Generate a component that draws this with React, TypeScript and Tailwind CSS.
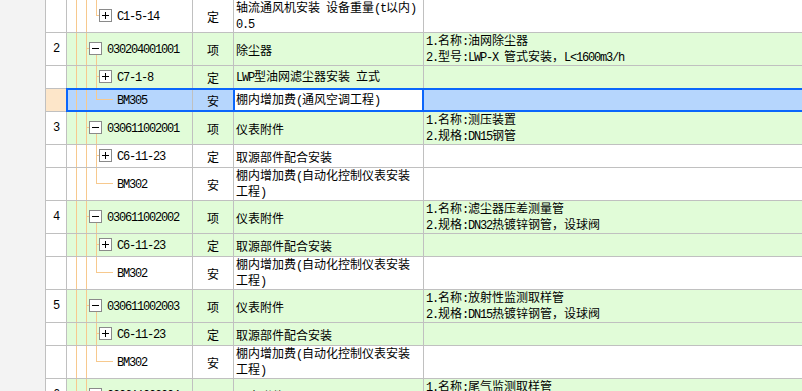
import React from 'react';

type Kind = 'item' | 'child' | 'last' | 'lastBox';

interface RowData {
  idx?: string;
  kind: Kind;
  code: string;
  type: string;
  name: string[];
  feat: string[];
  bg: 'green' | 'white' | 'sel';
  tall: boolean;
}

const rows: RowData[] = [
  { kind: 'lastBox', code: 'C1-5-14', type: '定', name: ['轴流通风机安装 设备重量(t以内)', '0.5'], feat: [], bg: 'white', tall: true },
  { idx: '2', kind: 'item', code: '030204001001', type: '项', name: ['除尘器'], feat: ['1.名称:油网除尘器', '2.型号:LWP-X 管式安装，L<1600m3/h'], bg: 'green', tall: true },
  { kind: 'child', code: 'C7-1-8', type: '定', name: ['LWP型油网滤尘器安装 立式'], feat: [], bg: 'green', tall: false },
  { kind: 'last', code: 'BM305', type: '安', name: ['棚内增加费(通风空调工程)'], feat: [], bg: 'sel', tall: false },
  { idx: '3', kind: 'item', code: '030611002001', type: '项', name: ['仪表附件'], feat: ['1.名称:测压装置', '2.规格:DN15钢管'], bg: 'green', tall: true },
  { kind: 'child', code: 'C6-11-23', type: '定', name: ['取源部件配合安装'], feat: [], bg: 'white', tall: false },
  { kind: 'last', code: 'BM302', type: '安', name: ['棚内增加费(自动化控制仪表安装', '工程)'], feat: [], bg: 'white', tall: true },
  { idx: '4', kind: 'item', code: '030611002002', type: '项', name: ['仪表附件'], feat: ['1.名称:滤尘器压差测量管', '2.规格:DN32热镀锌钢管，设球阀'], bg: 'green', tall: true },
  { kind: 'child', code: 'C6-11-23', type: '定', name: ['取源部件配合安装'], feat: [], bg: 'green', tall: false },
  { kind: 'last', code: 'BM302', type: '安', name: ['棚内增加费(自动化控制仪表安装', '工程)'], feat: [], bg: 'white', tall: true },
  { idx: '5', kind: 'item', code: '030611002003', type: '项', name: ['仪表附件'], feat: ['1.名称:放射性监测取样管', '2.规格:DN15热镀锌钢管，设球阀'], bg: 'green', tall: true },
  { kind: 'child', code: 'C6-11-23', type: '定', name: ['取源部件配合安装'], feat: [], bg: 'green', tall: false },
  { kind: 'last', code: 'BM302', type: '安', name: ['棚内增加费(自动化控制仪表安装', '工程)'], feat: [], bg: 'white', tall: true },
  { idx: '6', kind: 'item', code: '030611002004', type: '项', name: ['仪表附件'], feat: ['1.名称:尾气监测取样管', '2.规格:DN15热镀锌钢管，设球阀'], bg: 'green', tall: true },
];

// ascii runs get a half-width mono face, like the song-style font in the original grid
function Txt({ s }: { s: string }) {
  const parts = s.split(/([\x20-\x7e]+)/).filter(Boolean);
  return (
    <>
      {parts.map((p, i) =>
        /^[\x20-\x7e]+$/.test(p) ? (
          <span key={i} className="font-['Liberation_Mono',monospace] tracking-[-1.2px] whitespace-pre">
            {p}
          </span>
        ) : (
          <span key={i}>{p}</span>
        )
      )}
    </>
  );
}

const LINE = '#f7c98e';

// expand/collapse box, bx = left pixel, m = row of the connector line
function Box({ bx, m, minus }: { bx: number; m: number; minus?: boolean }) {
  return (
    <g>
      <rect x={bx + 0.5} y={m - 5.5} width="12" height="12" fill="white" stroke="#8a8a8a" />
      <path d={`M${bx + 3} ${m + 0.5}h7`} stroke="#000" />
      {!minus && <path d={`M${bx + 6.5} ${m - 3}v7`} stroke="#000" />}
    </g>
  );
}

function Tree({ kind, h }: { kind: Kind; h: number }) {
  const m = h / 2 - 1;
  const w = kind === 'item' ? 40 : 50;
  return (
    <svg width={w} height={h} className="shrink-0">
      <path d={`M9.5 0V${h}M19.5 0V${h}`} stroke={LINE} />
      {kind === 'item' && (
        <>
          <path d={`M19 ${m + 0.5}H22M29.5 ${m + 7}V${h}`} stroke={LINE} />
          <Box bx={22} m={m} minus />
        </>
      )}
      {kind === 'child' && (
        <>
          <path d={`M29.5 0V${h}M29 ${m + 0.5}H32`} stroke={LINE} />
          <Box bx={32} m={m} />
        </>
      )}
      {kind === 'lastBox' && (
        <>
          <path d={`M29.5 0V${m + 1}M29 ${m + 0.5}H32`} stroke={LINE} />
          <Box bx={32} m={m} />
        </>
      )}
      {kind === 'last' && <path d={`M29.5 0V${m + 1}M29 ${m + 0.5}H46`} stroke={LINE} />}
    </svg>
  );
}

function Row({ r }: { r: RowData }) {
  const sel = r.bg === 'sel';
  const bg = r.bg === 'green' ? 'bg-[#e1fcd8]' : sel ? 'bg-[#b6d6fd]' : 'bg-white';
  const cell = 'shrink-0 border-r border-[#c0c0c0]';
  return (
    <div className={`relative flex border-b border-[#c0c0c0] ${r.tall ? 'h-[33px]' : 'h-[23px]'}`}>
      <div className={`${cell} w-[21px] flex items-center justify-center ${sel ? 'bg-[#fde6c9]' : 'bg-white'}`}>
        {r.idx && <Txt s={r.idx} />}
      </div>
      <div className={`${cell} w-[126px] flex items-center ${bg}`}>
        <Tree kind={r.kind} h={r.tall ? 32 : 22} />
        <span className="whitespace-nowrap">
          <Txt s={r.code} />
        </span>
      </div>
      <div className={`${cell} w-[41px] flex items-center justify-center ${bg}`}>{r.type}</div>
      <div className={`${cell} w-[190px] flex flex-col justify-center pl-[2px] ${sel ? 'bg-white' : bg}`}>
        {r.name.map((n, i) => (
          <div key={i} className="whitespace-nowrap">
            <Txt s={n} />
          </div>
        ))}
      </div>
      <div className={`flex-1 flex flex-col justify-center pl-[2px] ${bg}`}>
        {r.feat.map((f, i) => (
          <div key={i} className="whitespace-nowrap">
            <Txt s={f} />
          </div>
        ))}
      </div>
      {sel && (
        <>
          {/* selection frame and the edit box over the name cell */}
          <div className="absolute left-[20px] right-[-4px] top-[-1px] h-[24px] border-2 border-[#0b66fb]" />
          <div className="absolute left-[187px] w-[191px] top-[-1px] h-[24px] border-2 border-[#0b66fb]" />
        </>
      )}
    </div>
  );
}

export default function App() {
  return (
    <div className="flex h-[391px] w-[802px] overflow-hidden bg-white text-[12px] leading-[13px] text-black font-['Noto_Sans_CJK_SC',sans-serif]">
      <div className="w-[45px] shrink-0 bg-[#f3f3f3]" />
      <div className="flex-1 border-l border-[#c0c0c0]">
        {rows.map((r, i) => (
          <Row key={i} r={r} />
        ))}
      </div>
    </div>
  );
}
